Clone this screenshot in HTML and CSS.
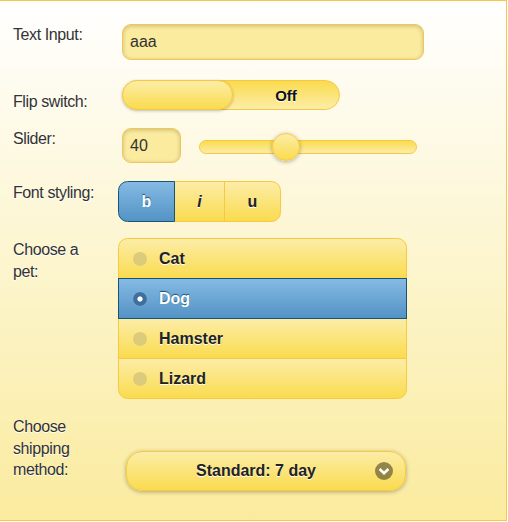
FILE: index.html
```html
<!DOCTYPE html>
<html>
<head>
<meta charset="utf-8">
<title>Form</title>
<link rel="stylesheet" href="styles.css">
</head>
<body>
<div class="page">
  <div class="field f1">
    <label class="lbl">Text Input:</label>
    <div class="ctl"><input class="txt" type="text" value="aaa"></div>
  </div>
  <div class="field f2">
    <label class="lbl lbl-flip">Flip switch:</label>
    <div class="flip">
      <div class="flip-handle"></div>
      <div class="flip-off">Off</div>
    </div>
  </div>
  <div class="field f3">
    <label class="lbl">Slider:</label>
    <div class="slider-row">
      <input class="num" type="text" value="40">
      <div class="track"><div class="handle"></div></div>
    </div>
  </div>
  <div class="field f4">
    <label class="lbl lbl-pad">Font styling:</label>
    <div class="seg">
      <div class="seg-btn seg-b">b</div>
      <div class="seg-btn seg-i">i</div>
      <div class="seg-btn seg-u">u</div>
    </div>
  </div>
  <div class="field f5">
    <label class="lbl lbl-pad">Choose a pet:</label>
    <div class="radios">
      <div class="radio"><span class="dot"></span>Cat</div>
      <div class="radio on"><span class="dot"></span>Dog</div>
      <div class="radio"><span class="dot"></span>Hamster</div>
      <div class="radio"><span class="dot"></span>Lizard</div>
    </div>
  </div>
  <div class="field f6">
    <label class="lbl">Choose shipping method:</label>
    <div class="select">
      <span class="select-text">Standard: 7 day</span>
      <span class="select-icon"><svg width="18" height="18" viewBox="0 0 18 18"><path d="M4.6 7 L9 11.2 L13.4 7" fill="none" stroke="#fff" stroke-width="2.6" stroke-linejoin="miter"/></svg></span>
    </div>
  </div>
</div>
</body>
</html>
```
FILE: styles.css
```css
* { box-sizing: border-box; }
html, body { margin: 0; padding: 0; }
body {
  width: 508px;
  height: 522px;
  overflow: hidden;
  background: #fff;
  font-family: "Liberation Sans", Arial, Helvetica, sans-serif;
  color: #333;
}
.page {
  margin-left: -1px;
  width: 508px;
  height: 521px;
  border: 1px solid #f7c942;
  background: linear-gradient(#ffffff, #faeb9e);
  padding: 23px 0 0 13px;
}
.field { display: flex; align-items: flex-start; }
.f1 { height: 36px; }
.f2 { height: 30px; margin-top: 20px; }
.f3 { height: 35px; margin-top: 18px; }
.f4 { height: 41px; margin-top: 18px; }
.f5 { height: 161px; margin-top: 16px; }
.f6 { height: 75px; margin-top: 17px; }

.lbl {
  flex: 0 0 105px;
  padding-right: 13px;
  font-size: 16px;
  line-height: 21.6px;
  letter-spacing: -0.4px;
  color: #333;
  text-shadow: 0 1px 0 #fff;
}
.lbl-flip { padding-top: 11px; }
.lbl-pad { padding-top: 1px; }

.txt, .num {
  height: 36px;
  border: 1px solid #f2c650;
  border-radius: 9px;
  background: #faeb9e;
  box-shadow: inset 0 1px 4px rgba(0, 0, 0, 0.2);
  padding: 0 7px;
  font: 16px "Liberation Sans", Arial, sans-serif;
  color: #333;
  outline: none;
}
.txt { margin-left: 4px; width: 302px; }

.flip {
  margin-left: 4px;
  width: 218px;
  height: 30px;
  border: 1px solid #f7c942;
  border-radius: 15px;
  background: linear-gradient(#fadb4e, #fceda7);
  display: flex;
}
.flip-handle {
  width: 111px;
  margin: -1px 0 -1px -1px;
  border: 1px solid #f7c942;
  border-radius: 15px;
  background: linear-gradient(#fceda7, #fadb4e);
  box-shadow: 0 1px 3px rgba(0, 0, 0, 0.25);
}
.flip-off {
  flex: 1;
  display: flex;
  align-items: center;
  justify-content: center;
  font-weight: bold;
  font-size: 15px;
  color: #111;
  text-shadow: 0 1px 0 #fff;
}

.slider-row {
  margin-left: 4px;
  height: 35px;
  display: flex;
  align-items: center;
}
.num { width: 59px; height: 35px; }
.track {
  position: relative;
  margin: 3px 0 0 18px;
  width: 218px;
  height: 14px;
  border: 1px solid #f7c942;
  border-radius: 7px;
  background: linear-gradient(#fadb4e, #fceda7);
}
.handle {
  position: absolute;
  left: 40%;
  top: 50%;
  width: 28px;
  height: 28px;
  margin: -14px 0 0 -14px;
  border: 1px solid #f7c942;
  border-radius: 50%;
  background: linear-gradient(#fceda7, #fadb4e);
  box-shadow: 0 1px 4px rgba(0, 0, 0, 0.3);
}

.seg { display: flex; height: 41px; }
.seg-btn {
  height: 41px;
  border: 1px solid #f7c942;
  background: linear-gradient(#fceda7, #fadb4e);
  display: flex;
  align-items: center;
  justify-content: center;
  font-weight: bold;
  font-size: 16px;
  color: #222;
  text-shadow: 0 1px 0 #fff;
}
.seg-b {
  width: 57px;
  border-color: #155678;
  background: linear-gradient(#85bae4, #5393c5);
  color: #fff;
  text-shadow: 0 -1px 1px #145072;
  border-radius: 9.6px 0 0 9.6px;
  position: relative;
  z-index: 1;
}
.seg-i { width: 51px; margin-left: -1px; font-style: italic; }
.seg-u { width: 57px; margin-left: -1px; border-radius: 0 9.6px 9.6px 0; }

.radios { width: 289px; }
.radio {
  display: flex;
  align-items: center;
  height: 41px;
  border: 1px solid #f7c942;
  background: linear-gradient(#fceda7, #fadb4e);
  padding-left: 14px;
  font-weight: bold;
  font-size: 16px;
  color: #222;
  text-shadow: 0 1px 0 #fff;
}
.radio + .radio { margin-top: -1px; }
.radio:first-child { border-radius: 9.6px 9.6px 0 0; }
.radio:last-child { border-radius: 0 0 9.6px 9.6px; }
.radio.on {
  border-color: #155678;
  background: linear-gradient(#85bae4, #5393c5);
  color: #fff;
  text-shadow: 0 -1px 1px #145072;
  position: relative;
  z-index: 1;
}
.dot {
  flex: none;
  width: 14px;
  height: 14px;
  margin-right: 12px;
  border-radius: 50%;
  background: #dccb7a;
}
.radio.on .dot {
  background: radial-gradient(circle, #fff 0, #fff 2.2px, rgba(255,255,255,0) 3px), #3f6f9e;
  box-shadow: 0 0 1px rgba(255, 255, 255, 0.4);
}

.select {
  margin: 35px 0 0 8px;
  width: 280px;
  height: 40px;
  border: 1px solid #f7c942;
  border-radius: 16px;
  background: linear-gradient(#fceda7, #fadb4e);
  box-shadow: 0 1px 4px rgba(0, 0, 0, 0.3);
  display: flex;
  align-items: center;
  padding: 0 12px 0 24px;
  font-weight: bold;
  font-size: 16px;
  color: #222;
  text-shadow: 0 1px 0 #fff;
}
.select-text { flex: 1; text-align: center; margin-right: 14px; }
.select-icon {
  flex: none;
  width: 18px;
  height: 18px;
  border-radius: 50%;
  background: rgba(0, 0, 0, 0.42);
  display: flex;
}
```
